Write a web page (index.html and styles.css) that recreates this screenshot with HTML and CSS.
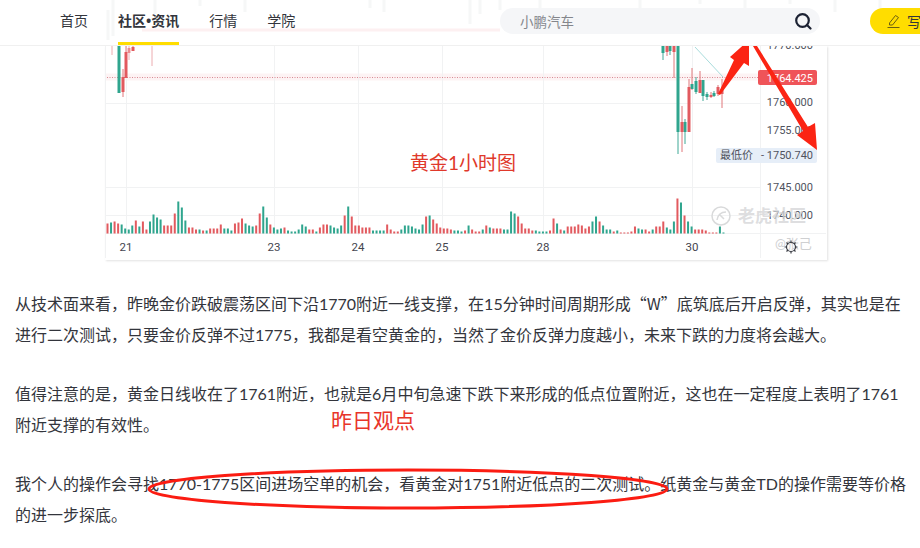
FILE: index.html
```html
<!DOCTYPE html>
<html lang="zh-CN">
<head>
    <meta charset="UTF-8">
    <title>社区资讯</title>
    <link rel="stylesheet" href="styles.css">
</head>
<body>
    <header class="topbar">
        <svg class="topbar-ghost" viewBox="0 0 920 46" aria-hidden="true">
            <path class="ghost-line" d="M142 30H500"/>
            <path class="ghost-candle" d="M108 10V40M113 0V36M155 0V14M200 0V6M245 0V12M370 0V8M384 0V12M470 0V24M480 0V14M500 0V10M540 0V8M640 0V10M700 0V4M745 0V8M790 0V4M835 0V12M880 0V8"/>
        </svg>
        <nav class="nav">
            <a class="nav-item">首页</a>
            <a class="nav-item active">社区•资讯</a>
            <a class="nav-item">行情</a>
            <a class="nav-item">学院</a>
        </nav>
        <div class="search">
            <span class="search-text">小鹏汽车</span>
            <svg class="search-icon" viewBox="0 0 18 18">
                <circle cx="8.5" cy="8.5" r="6.3"/>
                <path d="M13 13L16.5 16.5"/>
            </svg>
        </div>
        <button class="write">
            <svg class="write-icon" viewBox="0 0 13 14">
                <path d="M2.500 9L8.500 1.500L11.500 3.500L5.500 11H2.500Z"/>
                <path d="M0.500 13.500H12.500"/>
            </svg>
            写
        </button>
    </header>

    <main class="article">
        <figure class="chart">
            <svg id="chart" viewBox="105 46 722 214">
                <path class="band" d="M106 77H760"/>
                <path class="grid" d="M105.500 46V258M126.500 46V235M274.500 46V235M358.500 46V235M442.500 46V235M543.500 46V235M692.500 46V235M106 103.500H760M106 187.500H760M106 215.500H760M106 233.500H826M760.500 46V258"/>
                <path class="price-line" d="M107 77.500H758"/>

                <!-- left group -->
                <path class="wick-r pale" d="M112 46V55M129 46V60M152 46V66"/>
                <path class="wick-r" d="M123 69V97M126 46V52M133 46V51"/>
                <path class="body-g" d="M119 46V93"/>
                <path class="body-r" d="M123 77V92M126 52V78M133 47V51"/>
                <path class="body-r pale" d="M129 48V53"/>

                <!-- right group -->
                <path class="ma" d="M695 47L723 77"/>
                <path class="wick-g" d="M663 46V60M670 46V55M678 132V154M685 119V144M696 77V94M703 96V101M707 92V100M714 91V97"/>
                <path class="wick-r" d="M667 46V56M674 46V78M682 106V152M689 79V87M692 68V90M700 71V80M711 92V98M718 85V96M722 79V108"/>
                <path class="body-g" d="M663 46V53M670 46V51M678 46V132M685 122V132M692 84V89M696 81V92M703 80V96M707 94V97M714 93V96"/>
                <path class="body-r" d="M667 46V52M674 46V52M682 122V132M689 87V132M700 80V93M711 95V97M718 87V94M722 89V94"/>

                <g id="volume"></g>

                <rect class="price-tag" x="758" y="70" width="59" height="15" rx="2"/>
                <text class="price-tag-text" x="813" y="82" text-anchor="end">1764.425</text>
                <text class="axis" x="813" y="49" text-anchor="end">1770.000</text>
                <text class="axis" x="813" y="106" text-anchor="end">1760.000</text>
                <text class="axis" x="813" y="134" text-anchor="end">1755.000</text>
                <rect class="low-tag" x="716" y="148" width="101" height="15" rx="2"/>
                <text class="axis low" x="720" y="159">最低价</text>
                <text class="axis" x="813" y="159" text-anchor="end">- 1750.740</text>
                <text class="axis" x="813" y="191" text-anchor="end">1745.000</text>
                <text class="axis" x="813" y="219" text-anchor="end">1740.000</text>

                <text class="date" x="126" y="251" text-anchor="middle">21</text>
                <text class="date" x="274" y="251" text-anchor="middle">23</text>
                <text class="date" x="358" y="251" text-anchor="middle">24</text>
                <text class="date" x="442" y="251" text-anchor="middle">25</text>
                <text class="date" x="543" y="251" text-anchor="middle">28</text>
                <text class="date" x="692" y="251" text-anchor="middle">30</text>

                <g class="mark">
                    <circle cx="721" cy="216" r="9"/>
                    <path d="M717 220C718 214 722 212 726 212M719 214L724 219"/>
                </g>
                <text class="mark-text" x="738" y="222">老虎社区</text>
                <text class="mark-small" x="775" y="248">@张己</text>
                <g class="gear">
                    <circle cx="791" cy="247" r="4.500"/>
                    <path d="M791 240.500V242.500M791 251.500V253.500M784.500 247H786.500M795.500 247H797.500M786.500 242.500L788 244M794 250L795.500 251.500M795.500 242.500L794 244M788 250L786.500 251.500"/>
                </g>

                <text class="chart-title" x="410" y="170">黄金1小时图</text>
                <polygon class="arrow" points="718,94 734,60 730,57 749,40 749,66 744,63 720,95"/>
                <polygon class="arrow" points="753,46 757,46 808,127 815,123 817,150 797,135 803,131"/>
            </svg>
        </figure>

        <p>从技术面来看，昨晚金价跌破震荡区间下沿1770附近一线支撑，在15分钟时间周期形成<span class="quote">“W”</span>底筑底后开启反弹，其实也是在进行二次测试，只要金价反弹不过1775，我都是看空黄金的，当然了金价反弹力度越小，未来下跌的力度将会越大。</p>
        <p>值得注意的是，黄金日线收在了1761附近，也就是6月中旬急速下跌下来形成的低点位置附近，这也在一定程度上表明了1761附近支撑的有效性。</p>
        <p>我个人的操作会寻找1770-1775区间进场空单的机会，看黄金对1751附近低点的二次测试。纸黄金与黄金TD的操作需要等价格的进一步探底。</p>

        <span class="note">昨日观点</span>
        <svg class="circle-note" viewBox="0 0 530 46">
            <ellipse cx="265" cy="23" rx="259" ry="19"/>
        </svg>
    </main>

    <script src="chart.js"></script>
</body>
</html>
```

FILE: styles.css
```css
html, body {
    margin: 0;
    height: 548px;
    overflow: hidden;
    background: #fff;
}
body {
    font-family: Lato, "Noto Sans CJK SC", sans-serif;
    color: #33353c;
}
.topbar {
    position: relative;
    z-index: 2;
    display: flex;
    align-items: center;
    height: 46px;
    box-sizing: border-box;
    border-bottom: 1px solid #f0f0f0;
    background: #fff;
    white-space: nowrap;
    overflow: hidden;
}
.topbar-ghost {
    position: absolute;
    left: 0;
    top: 0;
    width: 920px;
    height: 46px;
}
.ghost-line {
    stroke: #fdf0f1;
    stroke-width: 3;
    fill: none;
}
.ghost-candle {
    stroke: #f6f7f7;
    stroke-width: 3;
    fill: none;
}
.nav {
    position: relative;
    display: flex;
    flex: none;
    gap: 30px;
    box-sizing: border-box;
    padding-left: 60px;
    width: 500px;
    height: 100%;
    font-family: "Open Sans", "Noto Sans CJK SC", sans-serif;
}
.nav-item {
    display: block;
    height: 42px;
    line-height: 42px;
    font-size: 14px;
    color: #33353c;
}
.nav-item.active {
    font-weight: 700;
    border-bottom: 3px solid #ffdd00;
}
.search {
    position: relative;
    display: flex;
    flex: none;
    align-items: center;
    justify-content: space-between;
    width: 320px;
    height: 26px;
    margin-bottom: 3px;
    padding: 0 8px 0 20px;
    box-sizing: border-box;
    border-radius: 13px;
    background: #f5f6f8;
}
.search-text {
    font-size: 13.500px;
    color: #84868c;
}
.search-icon {
    width: 18px;
    height: 18px;
    fill: none;
    stroke: #1c2233;
    stroke-width: 2.200;
    stroke-linecap: round;
}
.write {
    position: relative;
    display: flex;
    flex: none;
    align-items: center;
    gap: 7px;
    margin-left: 50px;
    margin-bottom: 3px;
    height: 26px;
    padding: 0 20px 0 17px;
    border: none;
    border-radius: 13px;
    background: #ffdd00;
    font-family: inherit;
    font-size: 14px;
    color: #33353c;
}
.write-icon {
    width: 13px;
    height: 14px;
    fill: none;
    stroke: #6b5f10;
    stroke-width: 1;
}
.article {
    position: relative;
    padding: 0 8px 0 15px;
    font-size: 16px;
    line-height: 31.500px;
}
.article p {
    margin: 0 0 27px;
}
.quote {
    font-family: "Noto Sans CJK SC", sans-serif;
}
.chart {
    margin: 0 0 27.500px 90px;
    width: 722px;
    height: 214px;
    box-shadow: 1px 1px 2px #e2e2e2;
}
.chart svg {
    display: block;
    width: 722px;
    height: 214px;
}
.band {
    stroke: #fdf3f4;
    stroke-width: 7;
}
.grid {
    stroke: #f1f2f3;
    stroke-width: 1;
    fill: none;
}
.price-line {
    stroke: #d98a93;
    stroke-width: 1;
    stroke-dasharray: 1 1.500;
}
.body-g {
    stroke: #2fa58e;
    stroke-width: 3;
    fill: none;
}
.body-r {
    stroke: #e25a5f;
    stroke-width: 3;
    fill: none;
}
.wick-r {
    stroke: #e0767b;
    stroke-width: 1;
    fill: none;
}
.wick-g {
    stroke: #3fa896;
    stroke-width: 1;
    fill: none;
}
.pale {
    opacity: 0.6;
}
.ma {
    stroke: #a8dcdc;
    stroke-width: 1;
    fill: none;
}
.vol-r {
    fill: #e25a5f;
}
.vol-g {
    fill: #2fa58e;
}
.price-tag {
    fill: #ef5459;
}
.price-tag-text {
    font-family: Roboto, sans-serif;
    font-size: 11px;
    fill: #fff;
}
.low-tag {
    fill: #e6eef8;
}
.axis {
    font-family: Roboto, "Noto Sans CJK SC", sans-serif;
    font-size: 11px;
    fill: #50535e;
}
.date {
    font-family: Roboto, sans-serif;
    font-size: 11.500px;
    fill: #44464f;
}
.mark {
    fill: none;
    stroke: #d9dadb;
    stroke-width: 1.500;
}
.mark-text {
    font-size: 17px;
    font-weight: 700;
    fill: #d5d6d8;
    fill-opacity: 0.8;
}
.mark-small {
    font-size: 13px;
    fill: #cfd0d2;
}
.gear {
    fill: none;
    stroke: #3a3c44;
    stroke-width: 1.200;
}
.chart-title {
    font-size: 19px;
    fill: #e0392b;
}
.arrow {
    fill: #fb2413;
}
.note {
    position: absolute;
    left: 331px;
    top: 359px;
    font-size: 21px;
    line-height: 30px;
    color: #e8352a;
}
.circle-note {
    position: absolute;
    left: 143px;
    top: 420px;
    width: 530px;
    height: 46px;
    fill: none;
    stroke: #fb1c12;
    stroke-width: 3;
}
```

FILE: chart.js
```js
// volume bars, positive = red, negative = green
var vols = [
    10, -11, 12, 10, -9, -5, -4, -8, 13, -7,
    12, 4, -12, -19, -16, -14, 8, 8, 8, 20,
    -32, -26, -13, 6, 6, 4, -4, 3, -3, 5,
    5, 5, 9, -5, -5, -3, 10, 11, 15, -10,
    -8, -7, 8, 20, -27, -16, 9, -6, -4, -5,
    6, -3, -2, -2, -4, -9, -7, 4, 4, -2,
    6, 9, 9, -8, -6, -5, -8, 18, -27, 17,
    8, 8, 6, 6, 6, -3, -3, -3, -3, 9,
    4, 2, 2, -4, -8, -8, -7, -5, -4, -9,
    17, -18, 14, 10, 6, 5, 5, 4, -3, -3,
    -2, 3, -8, 4, 2, 2, -4, 8, -6, 5,
    5, 5, -4, -4, -22, -20, 17, 10, 5, 5,
    3, -3, -2, -2, -2, 3, 15, -10, 4, -3,
    7, 7, 7, 9, 8, 5, 7, -12, -17, 12,
    -8, -4, -4, 2, -3, 1, 1, 1, 2, 7,
    -5, -4, 4, 2, -4, 7, 7, 12, -6, -4,
    -12, 35, -31, 18, -12, -7, 4, 4, 4, 3,
    1, 1, 1, -7, -1
];

var group = document.getElementById("volume");
vols.forEach(function (v, i) {
    var bar = document.createElementNS("http://www.w3.org/2000/svg", "rect");
    var h = Math.abs(v);
    bar.setAttribute("x", 106.500 + i * 3.540);
    bar.setAttribute("y", 233.500 - h);
    bar.setAttribute("width", 2);
    bar.setAttribute("height", h);
    bar.setAttribute("class", v > 0 ? "vol-r" : "vol-g");
    group.appendChild(bar);
});
```
